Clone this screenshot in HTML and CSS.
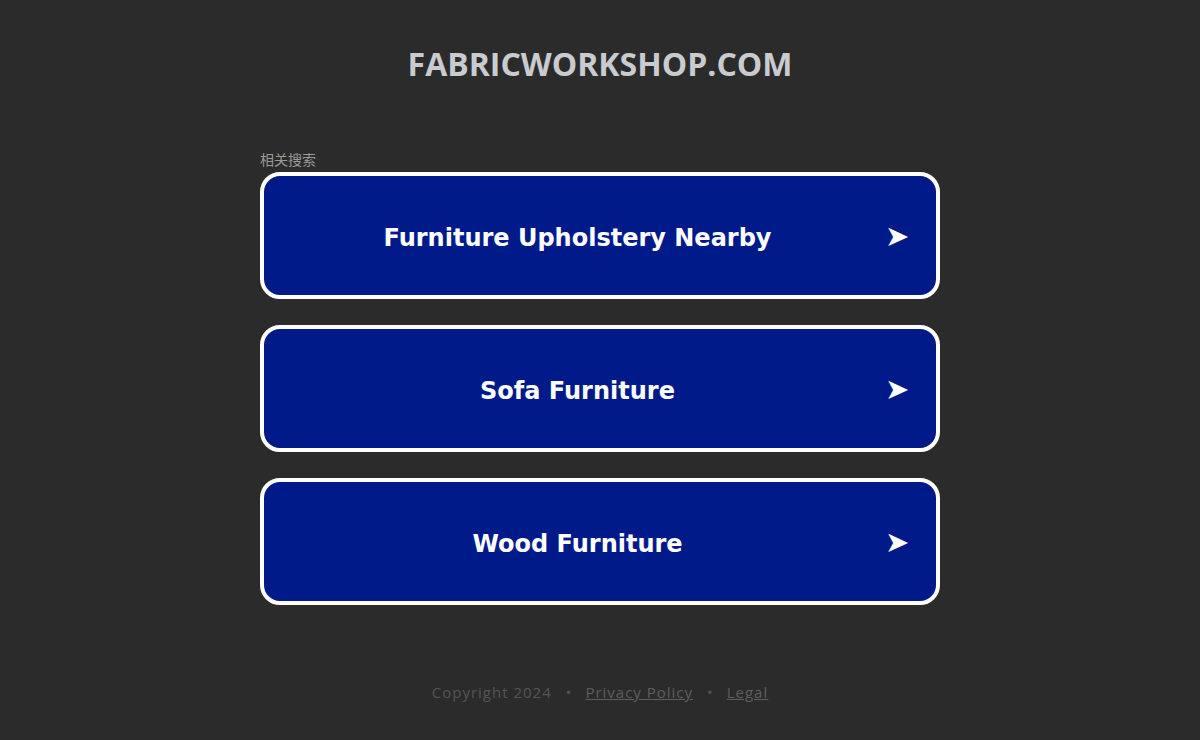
FILE: index.html
```html
<!DOCTYPE html>
<html lang="en">
<head>
<meta charset="utf-8">
<title>fabricworkshop.com</title>
<link rel="stylesheet" href="styles.css">
</head>
<body>
<div class="page">
  <header class="header">
    <h1 class="domain">FABRICWORKSHOP.COM</h1>
  </header>
  <main class="related">
    <div class="related-title">相关搜索</div>
    <ul class="links">
      <li><a class="link-card" href="#"><span class="link-text">Furniture Upholstery Nearby</span><span class="link-arrow">➤</span></a></li>
      <li><a class="link-card" href="#"><span class="link-text">Sofa Furniture</span><span class="link-arrow">➤</span></a></li>
      <li><a class="link-card" href="#"><span class="link-text">Wood Furniture</span><span class="link-arrow">➤</span></a></li>
    </ul>
  </main>
  <footer class="footer">
    <span>Copyright 2024</span>
    <span class="dot">•</span>
    <a href="#">Privacy Policy</a>
    <span class="dot">•</span>
    <a href="#">Legal</a>
  </footer>
</div>
</body>
</html>
```
FILE: styles.css
```css
html, body {
  margin: 0;
  padding: 0;
  background: #2b2b2b;
  height: 100%;
}
.page {
  display: flex;
  flex-direction: column;
  align-items: center;
  min-height: 740px;
  font-family: "Open Sans", "Liberation Sans", sans-serif;
}
.header {
  padding-top: 42px;
}
.domain {
  margin: 0;
  font-family: "Open Sans", "Liberation Sans", sans-serif;
  font-weight: 700;
  font-size: 32px;
  line-height: 44px;
  color: #c9cbd0;
  letter-spacing: 0;
}
.related {
  width: 680px;
  margin-top: 64px;
}
.related-title {
  font-family: "Noto Sans CJK SC", "Noto Sans", sans-serif;
  font-size: 14px;
  line-height: 18px;
  color: #9a9a9a;
  margin-bottom: 4px;
}
.links {
  list-style: none;
  margin: 0;
  padding: 0;
  display: flex;
  flex-direction: column;
  gap: 26px;
}
.link-card {
  box-sizing: border-box;
  height: 127px;
  display: flex;
  align-items: center;
  border: 4px solid #ffffff;
  border-radius: 20px;
  background: #011a8a;
  text-decoration: none;
  color: #ffffff;
  padding: 0 27px 0 0;
}
.link-text {
  flex: 1;
  text-align: center;
  font-family: "DejaVu Sans", Verdana, sans-serif;
  font-weight: 700;
  font-size: 24px;
  padding-left: 6px;
  position: relative;
  top: 2px;
}
.link-arrow {
  font-family: "DejaVu Sans", sans-serif;
  font-size: 29px;
  line-height: 1;
  color: #ffffff;
  width: 24px;
  text-align: center;
  position: relative;
  top: 1px;
}
.footer {
  margin-top: 77px;
  display: flex;
  gap: 14px;
  font-family: "Open Sans", "Liberation Sans", sans-serif;
  font-size: 15px;
  letter-spacing: 1px;
  color: #555555;
}
.footer a {
  color: #5e5e5e;
  text-decoration: underline;
}
.dot {
  letter-spacing: 0;
}
```
